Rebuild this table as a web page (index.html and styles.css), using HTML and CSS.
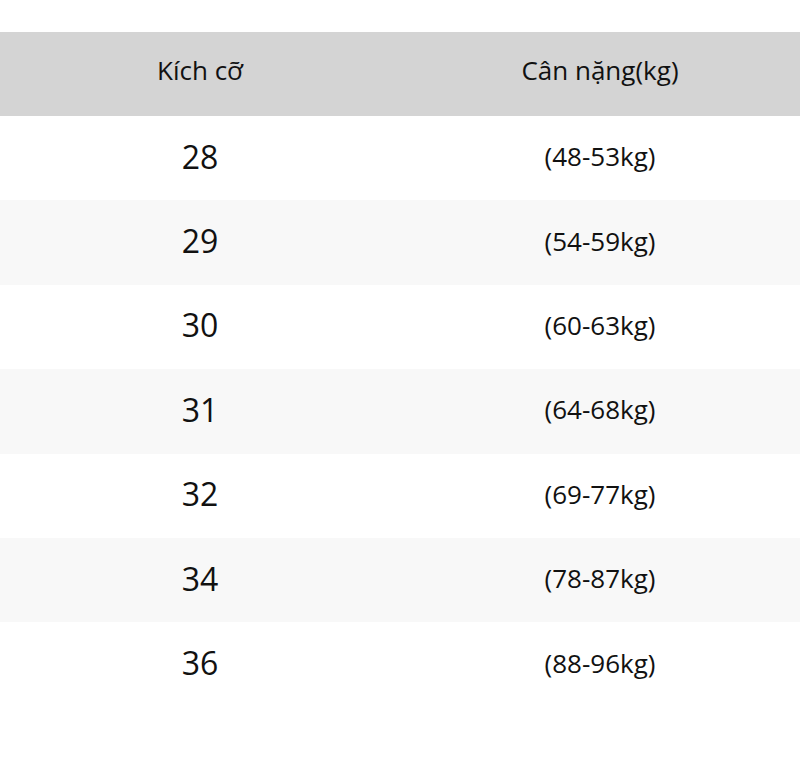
FILE: index.html
```html
<!DOCTYPE html>
<html lang="vi">
<head>
<meta charset="utf-8">
<link rel="stylesheet" href="styles.css">
</head>
<body>
<div class="table">
  <div class="row head"><div class="cell">Kích cỡ</div><div class="cell">Cân nặng(kg)</div></div>
  <div class="row"><div class="cell size">28</div><div class="cell weight">(48-53kg)</div></div>
  <div class="row alt"><div class="cell size">29</div><div class="cell weight">(54-59kg)</div></div>
  <div class="row"><div class="cell size">30</div><div class="cell weight">(60-63kg)</div></div>
  <div class="row alt"><div class="cell size">31</div><div class="cell weight">(64-68kg)</div></div>
  <div class="row"><div class="cell size">32</div><div class="cell weight">(69-77kg)</div></div>
  <div class="row alt"><div class="cell size">34</div><div class="cell weight">(78-87kg)</div></div>
  <div class="row"><div class="cell size">36</div><div class="cell weight">(88-96kg)</div></div>
</div>
</body>
</html>
```
FILE: styles.css
```css
html, body { margin: 0; padding: 0; background: #fff; }
body { font-family: "Open Sans", "Noto Sans", sans-serif; color: #111; }
.table { padding-top: 32px; display: flex; flex-direction: column; }
.row { display: grid; grid-template-columns: 1fr 1fr; height: 84.4px; align-items: center; box-sizing: border-box; padding-bottom: 4px; }
.row.head { height: 84px; background: #d4d4d4; padding-bottom: 8px; }
.row.alt { background: #f8f8f8; }
.cell { text-align: center; }
.head .cell { font-size: 26px; }
.size { font-size: 32px; }
.weight { font-size: 26px; }
```
